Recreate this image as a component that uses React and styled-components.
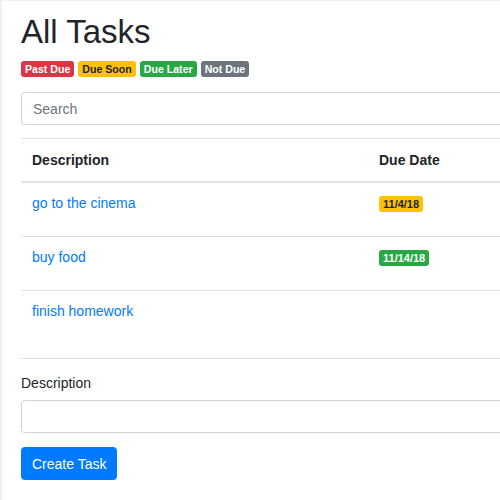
import { Fragment } from "react";
import styled, { createGlobalStyle } from "styled-components";

const GlobalStyle = createGlobalStyle`
  html, body {
    margin: 0;
    background: #fff;
    overflow: hidden;
  }
  body {
    font-family: "Liberation Sans", Arial, sans-serif;
    color: #212529;
  }
`;

const Page = styled.div`
  width: 600px;
  height: 500px;
  box-sizing: border-box;
  padding: 12px 0 0 19px;
  border-left: 2px solid #efeefa;
  border-top: 1px solid #f1f0fa;
`;

const Title = styled.h1`
  margin: 0;
  font-size: 33px;
  font-weight: 500;
  line-height: 38px;
`;

const Legend = styled.div`
  display: flex;
  gap: 4px;
  margin-top: 10px;
`;

const Badge = styled.span`
  display: inline-block;
  height: 16px;
  line-height: 16px;
  padding: 0 4px;
  border-radius: 3px;
  font-size: 10.6px;
  font-weight: 700;
  color: ${(p) => (p.$bg === "#ffc107" ? "#212529" : "#fff")};
  background: ${(p) => p.$bg};
`;

const Input = styled.input`
  display: block;
  box-sizing: border-box;
  width: 100%;
  height: 33px;
  padding: 0 11px;
  border: 1px solid #ced4da;
  border-radius: 3.5px;
  font-family: inherit;
  font-size: 14px;
  color: #495057;
  background: #fff;
  margin-top: ${(p) => p.$top || 0}px;
  &::placeholder {
    color: #6c757d;
  }
`;

const Table = styled.div`
  display: grid;
  grid-template-columns: 347px 1fr;
  margin-top: 13px;
  border-bottom: 1px solid #dee2e6;
  font-size: 14px;
  line-height: 21px;
`;

const Th = styled.div`
  padding: 10.5px 11px;
  font-weight: 700;
  border-top: 1px solid #dee2e6;
  border-bottom: 2px solid #dee2e6;
`;

const Td = styled.div`
  padding: 10px 11px ${(p) => (p.$tall ? 36 : 22)}px;
  border-top: ${(p) => (p.$first ? "none" : "1px solid #dee2e6")};
  display: flex;
  align-items: flex-start;
`;

const TaskLink = styled.a`
  color: #007bff;
  text-decoration: none;
`;

const DateBadge = styled(Badge)`
  margin-top: 3px;
  font-size: 11px;
`;

const Label = styled.label`
  display: block;
  margin-top: 14px;
  font-size: 14px;
  line-height: 21px;
`;

const Button = styled.button`
  display: block;
  margin-top: 14px;
  height: 33px;
  padding: 0 10px;
  border: 1px solid #007bff;
  border-radius: 3.5px;
  background: #007bff;
  color: #fff;
  font-family: inherit;
  font-size: 14px;
`;

const legend = [
  { text: "Past Due", bg: "#dc3545" },
  { text: "Due Soon", bg: "#ffc107" },
  { text: "Due Later", bg: "#28a745" },
  { text: "Not Due", bg: "#6c757d" },
];

const tasks = [
  { name: "go to the cinema", date: "11/4/18", bg: "#ffc107" },
  { name: "buy food", date: "11/14/18", bg: "#28a745" },
  { name: "finish homework" },
];

export default function App() {
  return (
    <>
      <GlobalStyle />
      <Page>
        <Title>All Tasks</Title>
        <Legend>
          {legend.map((l) => (
            <Badge key={l.text} $bg={l.bg}>
              {l.text}
            </Badge>
          ))}
        </Legend>
        <Input $top={15} placeholder="Search" />
        <Table>
          <Th>Description</Th>
          <Th>Due Date</Th>
          {tasks.map((t, i) => (
            <Fragment key={t.name}>
              <Td $first={i === 0} $tall={!t.date}>
                <TaskLink href="#">{t.name}</TaskLink>
              </Td>
              <Td $first={i === 0} $tall={!t.date}>
                {t.date && <DateBadge $bg={t.bg}>{t.date}</DateBadge>}
              </Td>
            </Fragment>
          ))}
        </Table>
        <Label>Description</Label>
        <Input $top={6} />
        <Button>Create Task</Button>
      </Page>
    </>
  );
}
